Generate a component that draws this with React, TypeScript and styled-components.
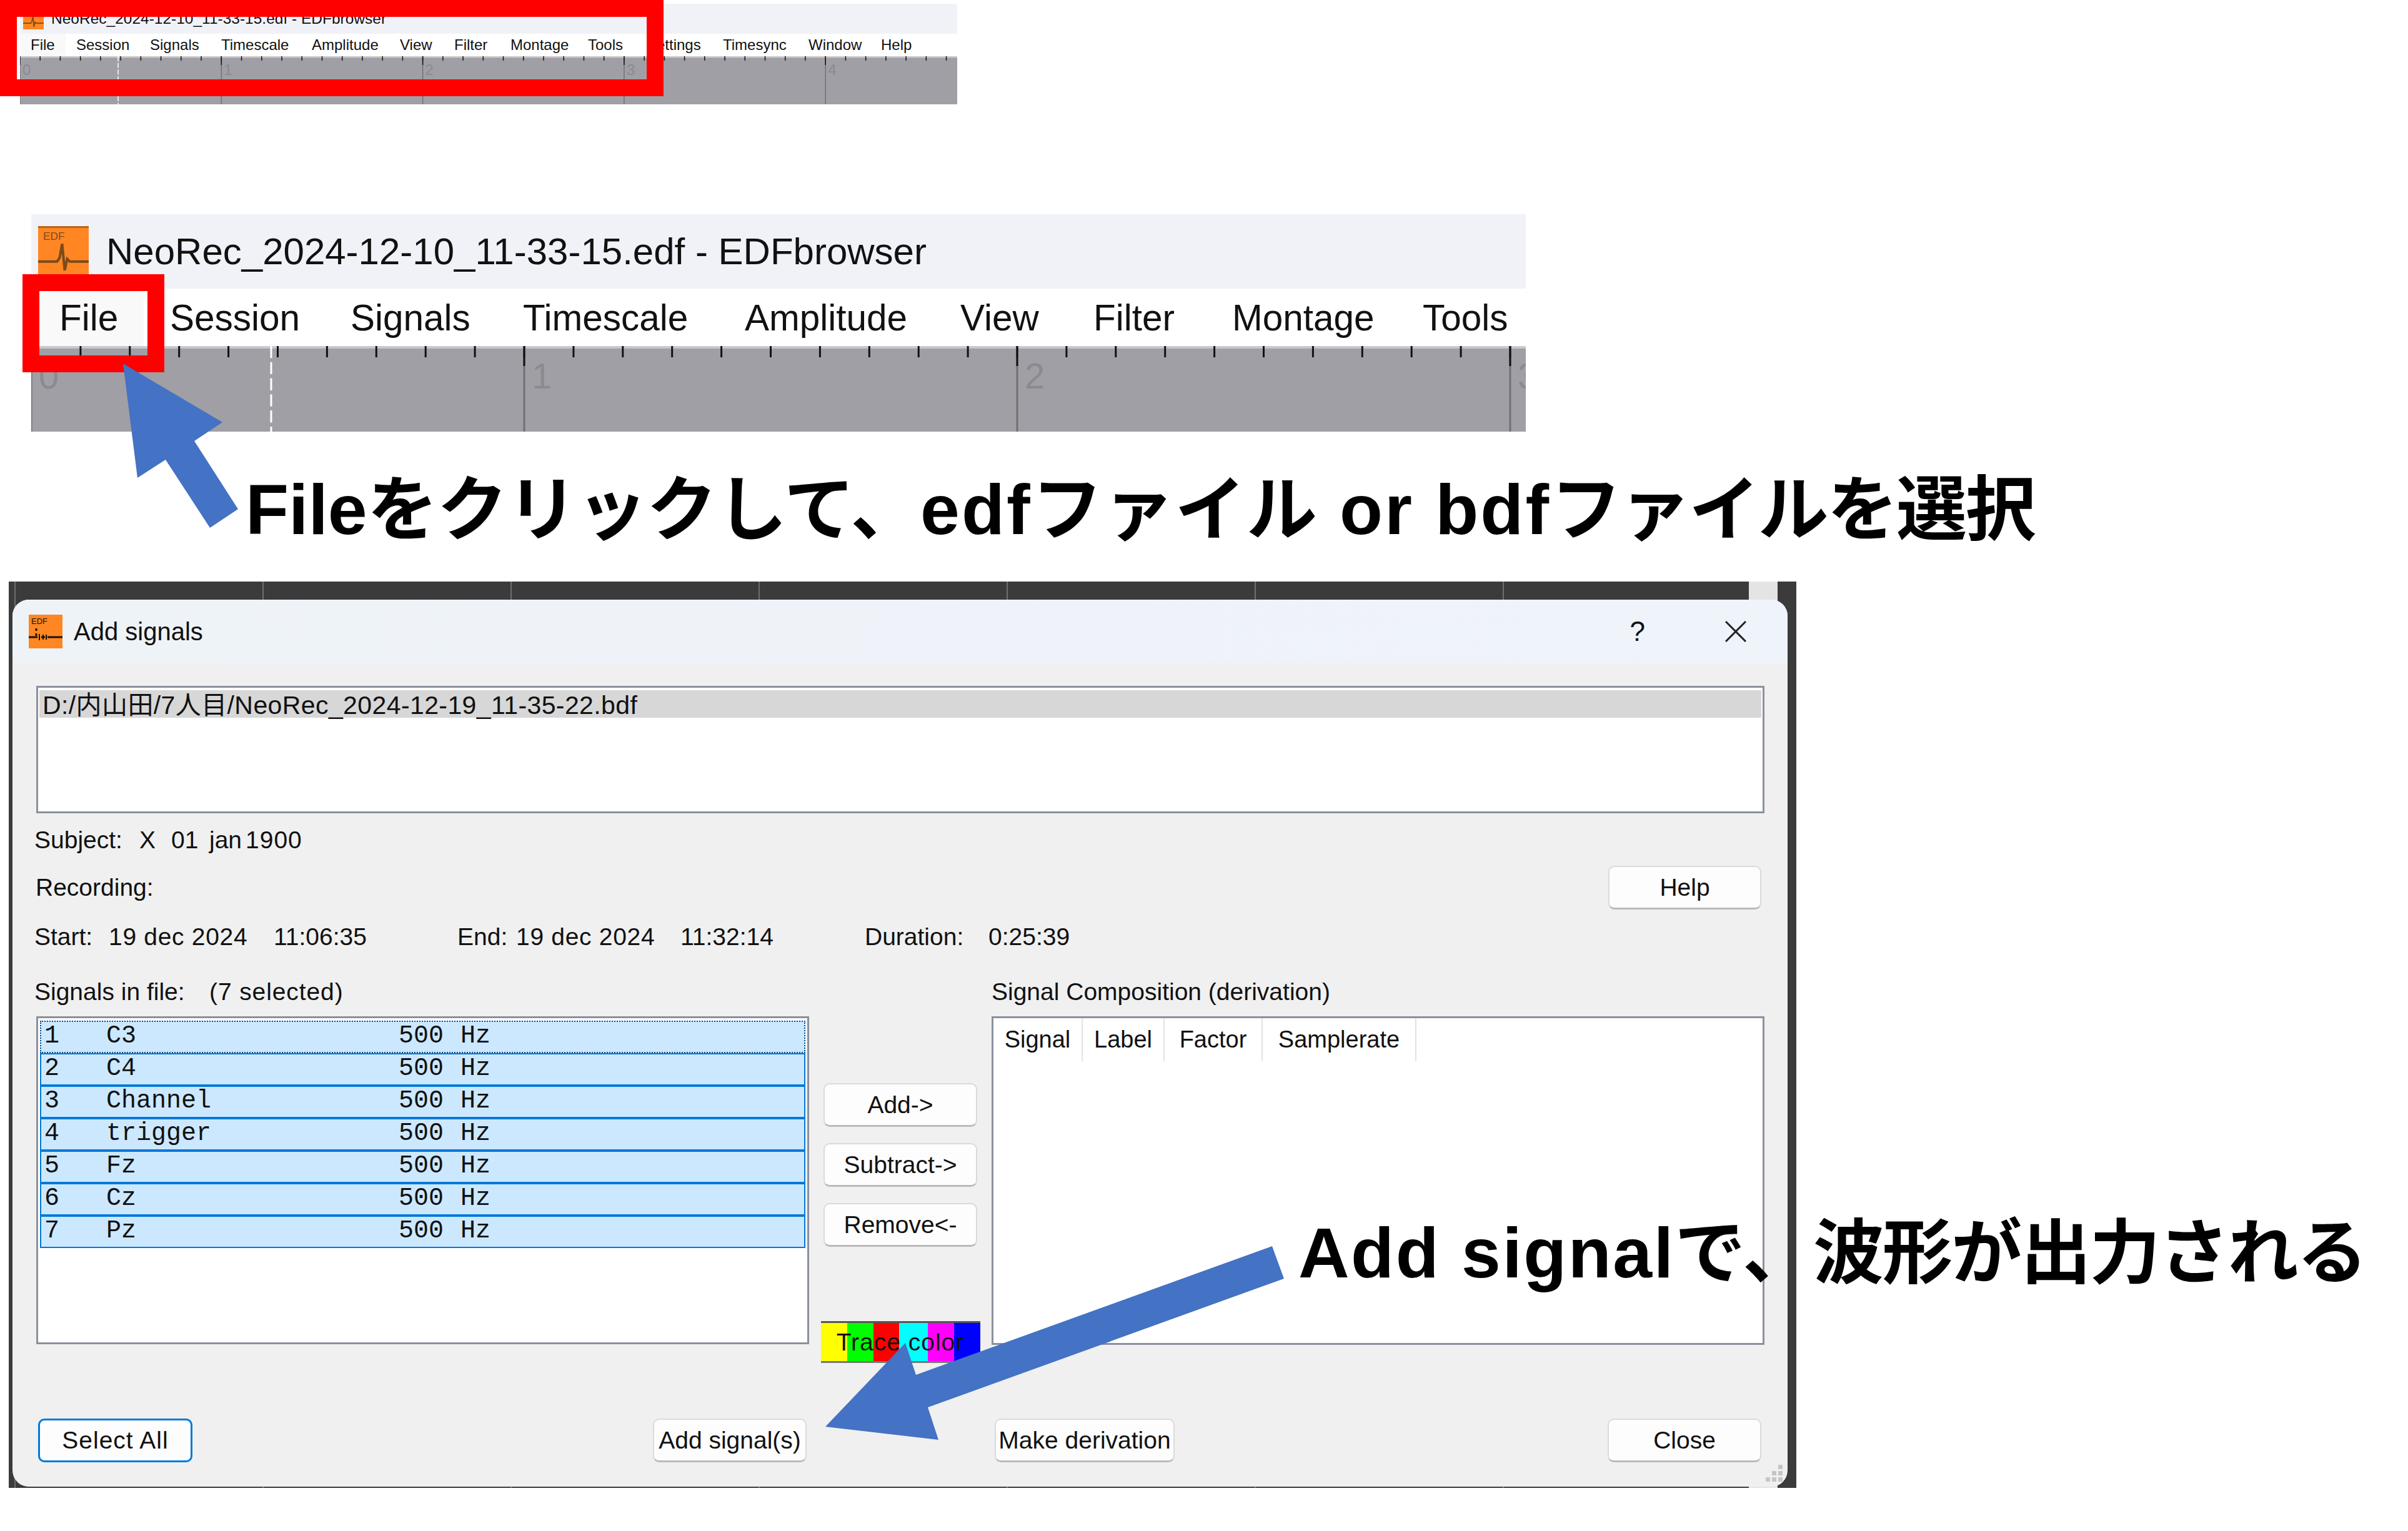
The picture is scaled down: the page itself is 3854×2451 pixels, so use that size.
import styled, { createGlobalStyle } from "styled-components";

const GlobalStyle = createGlobalStyle`
  html, body {
    margin: 0;
    background: #fff;
  }
`;

const SANS = `"Liberation Sans", "Noto Sans CJK JP", sans-serif`;

const Page = styled.div`
  position: relative;
  width: 3854px;
  height: 2451px;
  overflow: hidden;
  background: #fff;
  color: #111;
  font-family: ${SANS};
  display: flex;
  flex-direction: column;
  align-items: flex-start;
`;

/* ---------- EDFbrowser window strips ---------- */

const BrowserWindow = styled.div<{ $left: number; $top: number; $width: number }>`
  margin: ${(p) => p.$top}px 0 0 ${(p) => p.$left}px;
  width: ${(p) => p.$width}px;
  display: flex;
  flex-direction: column;
`;

const WindowTitle = styled.div<{ $h: number; $size: number; $pad: number; $gap: number }>`
  height: ${(p) => p.$h}px;
  padding-left: ${(p) => p.$pad}px;
  display: flex;
  align-items: center;
  gap: ${(p) => p.$gap}px;
  background: #f1f2f8;
  font-size: ${(p) => p.$size}px;
  white-space: pre;
`;

const MenuBar = styled.div<{ $h: number; $size: number; $indent: number }>`
  height: ${(p) => p.$h}px;
  padding-left: ${(p) => p.$indent}px;
  display: flex;
  background: #fff;
  font-size: ${(p) => p.$size}px;
  white-space: pre;
  overflow: hidden;
`;

const MenuItem = styled.div<{ $pad: number; $w: number; $hover?: boolean }>`
  width: ${(p) => p.$w}px;
  box-sizing: border-box;
  padding-left: ${(p) => p.$pad}px;
  display: flex;
  align-items: center;
  background: ${(p) => (p.$hover ? "#f9f9f9" : "transparent")};
`;

const RulerSvg = styled.svg`
  display: block;
  background: #a09fa5;
`;

const RulerLabel = styled.text`
  fill: #8b8b8f;
  font-family: ${SANS};
`;

type RulerProps = {
  width: number;
  height: number;
  pitch: number;
  tick: number;
  major: number;
  dashX: number;
  stroke: number;
  font: number;
  labelX: number;
  labelY: number;
};

function Ruler({ width, height, pitch, tick, major, dashX, stroke, font, labelX, labelY }: RulerProps) {
  const minor = pitch / 10;
  const ticks: number[] = [];
  for (let x = minor; x < width; x += minor) ticks.push(x);
  const majors: number[] = [];
  for (let i = 0; i * pitch < width; i++) majors.push(i);

  return (
    <RulerSvg width={width} height={height}>
      <rect width={width} height={stroke + 1} fill="#c9c9cb" />
      {ticks.map((x) => (
        <line key={x} x1={x} x2={x} y1={0} y2={tick} stroke="#111" strokeWidth={stroke} />
      ))}
      {majors.map((i) => (
        <g key={i}>
          <line x1={i * pitch} x2={i * pitch} y1={0} y2={height} stroke="#717175" strokeWidth={stroke} />
          <line x1={i * pitch} x2={i * pitch} y1={0} y2={major} stroke="#111" strokeWidth={stroke} />
          <RulerLabel x={i * pitch + labelX} y={labelY} fontSize={font}>
            {i}
          </RulerLabel>
        </g>
      ))}
      <line
        x1={dashX}
        x2={dashX}
        y1={0}
        y2={height}
        stroke="#fff"
        strokeWidth={stroke}
        strokeDasharray={`${font / 3} ${font / 9}`}
      />
    </RulerSvg>
  );
}

function AppIcon({ size, line }: { size: number; line: string }) {
  return (
    <svg width={size} height={size} viewBox="0 0 80 80" style={{ flex: "none" }}>
      <rect width="80" height="80" fill="#ff8622" />
      <rect width="80" height="3" fill={line} opacity="0.55" />
      <text x="8" y="22" fontSize="17" fontFamily="Liberation Sans" fill={line}>
        EDF
      </text>
      <path d="M0 56H30L34 50L38 28L42 70L46 52L50 56H80" fill="none" stroke={line} strokeWidth="4" />
    </svg>
  );
}

function DialogIcon() {
  return (
    <svg width="54" height="54" viewBox="0 0 54 54" style={{ flex: "none" }}>
      <rect width="54" height="54" fill="#ff8622" />
      <text x="4" y="15" fontSize="13" fontFamily="Liberation Sans" fill="#1a1208">
        EDF
      </text>
      <path d="M12 22V26M12 30V34M0 36H14M20 36H26M30 36H54" stroke="#1a1208" strokeWidth="3" fill="none" />
      <path d="M17 31V41M23 32V40M28 32V40" stroke="#1a1208" strokeWidth="2" fill="none" />
    </svg>
  );
}

/* ---------- annotation text ---------- */

const Caption = styled.div`
  font-size: 113px;
  font-weight: 700;
  line-height: 120px;
  color: #000;
  white-space: pre;
`;

const FlowCaption = styled(Caption)`
  margin: 65px 0 0 393px;
`;

const FloatingCaption = styled(Caption)`
  position: absolute;
  left: 2078px;
  top: 1946px;
`;

const Run = styled.span<{ $ls: number }>`
  letter-spacing: ${(p) => p.$ls}px;
`;

const RedFrame = styled.div<{ $left: number; $top: number; $w: number; $h: number }>`
  position: absolute;
  left: ${(p) => p.$left}px;
  top: ${(p) => p.$top}px;
  width: ${(p) => p.$w}px;
  height: ${(p) => p.$h}px;
  box-sizing: border-box;
  border: 27px solid #ff0000;
`;

const ArrowLayer = styled.svg`
  position: absolute;
  left: 0;
  top: 0;
`;

/* ---------- Add signals dialog ---------- */

const Backdrop = styled.div`
  margin: 55px 0 0 14px;
  width: 2861px;
  height: 1451px;
  box-sizing: border-box;
  padding: 29px 14px 2px 6px;
  background-color: #3b3b3b;
  background-image: linear-gradient(#e4e4e4, #e4e4e4), linear-gradient(90deg, #6e6e6e 2px, transparent 2px);
  background-repeat: no-repeat, repeat;
  background-size: 46px 100%, 397px 100%;
  background-position: 2785px 0, 9px 0;
`;

const Dialog = styled.div`
  position: relative;
  height: 100%;
  border-radius: 26px;
  overflow: hidden;
  background: #f0f0f0;
  font-size: 39px;
  white-space: pre;
`;

const DialogTitle = styled.div`
  height: 102px;
  padding: 0 66px 0 26px;
  display: flex;
  align-items: center;
  gap: 18px;
  background: linear-gradient(90deg, #eef3f8, #eff3fa);
  font-size: 40px;
`;

const TitleHelp = styled.span`
  margin-left: auto;
  margin-right: 110px;
  font-size: 44px;
`;

const DialogBody = styled.div`
  padding: 36px 37px 0 35px;
`;

const ListBox = styled.div`
  box-sizing: border-box;
  border: 3px solid #8a909c;
  background: #fff;
`;

const FileList = styled(ListBox)`
  margin-left: 3px;
  height: 204px;
  padding: 4px 2px 0;
`;

const FileRow = styled.div`
  height: 44px;
  box-sizing: border-box;
  padding: 0 0 4px 5px;
  display: flex;
  align-items: center;
  background: #d7d7d7;
  font-size: 41px;
  letter-spacing: 0.4px;
`;

const InfoRow = styled.div<{ $top: number }>`
  margin-top: ${(p) => p.$top}px;
  height: 46px;
  display: flex;
  align-items: center;
`;

const RecordingRow = styled.div`
  margin-top: 18px;
  height: 70px;
  padding: 0 5px 0 2px;
  display: flex;
  align-items: center;
  justify-content: space-between;
`;

const TimeRow = styled.div`
  margin-top: 21px;
  height: 46px;
  display: grid;
  grid-template-columns: 677px 652px auto;
  align-items: center;
`;

const Cell = styled.span<{ $w?: number; $ls?: number }>`
  display: inline-block;
  width: ${(p) => (p.$w ? `${p.$w}px` : "auto")};
  letter-spacing: ${(p) => p.$ls ?? 0}px;
`;

const Columns = styled.div`
  margin-top: 42px;
  display: grid;
  grid-template-columns: 1240px 255px 1237px;
  column-gap: 18.5px;
`;

const ListColumn = styled.div`
  display: flex;
  flex-direction: column;
  align-items: stretch;
`;

const ColumnLabel = styled.div`
  height: 46px;
  margin-bottom: 16px;
  display: flex;
  align-items: center;
`;

const SignalList = styled(ListBox)`
  margin-left: 3px;
  height: 525px;
  padding: 4px 3px 0;
`;

const SignalRow = styled.div<{ $focus?: boolean }>`
  height: 52px;
  box-sizing: border-box;
  padding: 0 0 3px 5px;
  display: grid;
  grid-template-columns: 99px 468px 99px auto;
  align-items: center;
  background: #cce8ff;
  border: 2px ${(p) => (p.$focus ? "dotted #0b4c86" : "solid #0078d7")};
  font-family: "Liberation Mono", monospace;
  font-size: 40px;
`;

const MoveColumn = styled.div`
  padding-top: 169px;
  display: flex;
  flex-direction: column;
  align-items: center;
  gap: 26px;
`;

const PushButton = styled.button<{ $w: number; $default?: boolean }>`
  width: ${(p) => p.$w}px;
  height: 70px;
  box-sizing: border-box;
  padding: 0;
  background: #fdfdfd;
  border: ${(p) => (p.$default ? "3px solid #0078d7" : "2px solid #dadada")};
  border-bottom: 3px solid ${(p) => (p.$default ? "#0078d7" : "#bababa")};
  border-radius: 10px;
  color: #111;
  font-family: ${SANS};
  font-size: 39px;
  letter-spacing: ${(p) => (p.$default ? 1 : 0)}px;
  white-space: pre;
`;

const TraceColor = styled.div`
  margin-top: 93px;
  width: 255px;
  height: 67px;
  box-sizing: border-box;
  display: flex;
  align-items: center;
  justify-content: center;
  border-top: 3px solid #555;
  border-bottom: 3px solid #777;
  background: linear-gradient(
    90deg,
    #ffff00 0 16.5%,
    #00ff00 16.5% 33%,
    #ff0000 33% 49%,
    #00ffff 49% 67%,
    #ff00ff 67% 83.5%,
    #0000ff 83.5% 100%
  );
  letter-spacing: 1px;
  color: #111;
`;

const CompositionBox = styled(ListBox)`
  height: 526px;
`;

const CompositionHeader = styled.div`
  height: 69px;
  display: flex;
  font-size: 38px;
`;

const HeaderCell = styled.div<{ $w: number }>`
  width: ${(p) => p.$w}px;
  box-sizing: border-box;
  display: flex;
  align-items: center;
  justify-content: center;
  border-right: 2px solid #e2e2e2;
`;

const Footer = styled.div`
  margin-top: 89px;
  padding-left: 6px;
  display: grid;
  grid-template-columns: 984px 547px 981px 246px;
`;

const SizeGrip = styled.svg`
  position: absolute;
  right: 5px;
  bottom: 5px;
`;

const MENU_SMALL: [string, number][] = [
  ["File", 73],
  ["Session", 118],
  ["Signals", 114],
  ["Timescale", 145],
  ["Amplitude", 141],
  ["View", 87],
  ["Filter", 90],
  ["Montage", 124],
  ["Tools", 94],
  ["Settings", 122],
  ["Timesync", 137],
  ["Window", 116],
  ["Help", 100],
];

const MENU_LARGE: [string, number][] = [
  ["File", 177],
  ["Session", 289],
  ["Signals", 276],
  ["Timescale", 355],
  ["Amplitude", 345],
  ["View", 213],
  ["Filter", 222],
  ["Montage", 305],
  ["Tools", 200],
];

const SIGNALS = ["C3", "C4", "Channel", "trigger", "Fz", "Cz", "Pz"];

const COMPOSITION_HEADERS: [string, number][] = [
  ["Signal", 143],
  ["Label", 131],
  ["Factor", 157],
  ["Samplerate", 246],
];

const GRIP_DOTS = [
  [20, 0],
  [20, 10],
  [10, 10],
  [20, 20],
  [10, 20],
  [0, 20],
];

export default function App() {
  return (
    <Page>
      <GlobalStyle />

      <BrowserWindow $left={32} $top={6} $width={1500}>
        <WindowTitle $h={48} $size={24.5} $pad={5} $gap={12}>
          <AppIcon size={33} line="#7a4a1a" />
          NeoRec_2024-12-10_11-33-15.edf - EDFbrowser
        </WindowTitle>
        <MenuBar $h={36} $size={24} $indent={0}>
          {MENU_SMALL.map(([m, w], i) => (
            <MenuItem key={m} $pad={17} $w={w} $hover={i === 0}>
              {m}
            </MenuItem>
          ))}
        </MenuBar>
        <Ruler width={1500} height={77} pitch={322.3} tick={7} major={14} dashX={157} stroke={1.5} font={24} labelX={4} labelY={30} />
      </BrowserWindow>

      <BrowserWindow $left={50} $top={176} $width={2392}>
        <WindowTitle $h={119} $size={60} $pad={11} $gap={28}>
          <AppIcon size={81} line="#7a4a1a" />
          NeoRec_2024-12-10_11-33-15.edf - EDFbrowser
        </WindowTitle>
        <MenuBar $h={92} $size={58.5} $indent={3}>
          {MENU_LARGE.map(([m, w], i) => (
            <MenuItem key={m} $pad={42} $w={w} $hover={i === 0}>
              {m}
            </MenuItem>
          ))}
        </MenuBar>
        <Ruler width={2392} height={137} pitch={789} tick={18} major={32} dashX={384} stroke={3} font={58} labelX={12} labelY={68} />
      </BrowserWindow>

      <FlowCaption>
        File
        <Run $ls={-1.2}>をクリックして、</Run>
        <Run $ls={3}>edf</Run>
        <Run $ls={1.5}>ファイル</Run>
        <Run $ls={3}> or bdf</Run>
        <Run $ls={-2.4}>ファイルを選択</Run>
      </FlowCaption>

      <Backdrop>
        <Dialog>
          <DialogTitle>
            <DialogIcon />
            Add signals
            <TitleHelp>?</TitleHelp>
            <svg width="34" height="34" viewBox="0 0 34 34">
              <path d="M1 1L33 33M33 1L1 33" stroke="#222" strokeWidth="3" fill="none" />
            </svg>
          </DialogTitle>

          <DialogBody>
            <FileList>
              <FileRow>D:/内山田/7人目/NeoRec_2024-12-19_11-35-22.bdf</FileRow>
            </FileList>

            <InfoRow $top={20}>
              <Cell $w={168}>Subject:</Cell>
              <Cell $w={51}>X</Cell>
              <Cell $w={61}>01</Cell>
              <Cell $w={58}>jan</Cell>
              <Cell $ls={1}>1900</Cell>
            </InfoRow>

            <RecordingRow>
              Recording:
              <PushButton $w={245}>Help</PushButton>
            </RecordingRow>

            <TimeRow>
              <div>
                <Cell $w={119}>Start:</Cell>
                <Cell $w={264} $ls={0.7}>19 dec 2024</Cell>
                <Cell>11:06:35</Cell>
              </div>
              <div>
                <Cell $w={94}>End:</Cell>
                <Cell $w={263} $ls={0.7}>19 dec 2024</Cell>
                <Cell>11:32:14</Cell>
              </div>
              <div>
                <Cell $w={198}>Duration:</Cell>
                <Cell>0:25:39</Cell>
              </div>
            </TimeRow>

            <Columns>
              <ListColumn>
                <ColumnLabel>
                  <Cell $w={280}>Signals in file:</Cell>
                  <Cell $ls={0.9}>(7 selected)</Cell>
                </ColumnLabel>
                <SignalList>
                  {SIGNALS.map((name, i) => (
                    <SignalRow key={name} $focus={i === 0}>
                      <span>{i + 1}</span>
                      <span>{name}</span>
                      <span>500</span>
                      <span>Hz</span>
                    </SignalRow>
                  ))}
                </SignalList>
              </ListColumn>

              <MoveColumn>
                <PushButton $w={246}>{"Add->"}</PushButton>
                <PushButton $w={246}>{"Subtract->"}</PushButton>
                <PushButton $w={246}>{"Remove<-"}</PushButton>
                <TraceColor>Trace color</TraceColor>
              </MoveColumn>

              <ListColumn>
                <ColumnLabel>Signal Composition (derivation)</ColumnLabel>
                <CompositionBox>
                  <CompositionHeader>
                    {COMPOSITION_HEADERS.map(([label, w]) => (
                      <HeaderCell key={label} $w={w}>
                        {label}
                      </HeaderCell>
                    ))}
                  </CompositionHeader>
                </CompositionBox>
              </ListColumn>
            </Columns>

            <Footer>
              <PushButton $w={247} $default>
                Select All
              </PushButton>
              <PushButton $w={246}>Add signal(s)</PushButton>
              <PushButton $w={288}>Make derivation</PushButton>
              <PushButton $w={246}>Close</PushButton>
            </Footer>
          </DialogBody>

          <SizeGrip width="30" height="30" viewBox="0 0 30 30">
            {GRIP_DOTS.map(([x, y]) => (
              <rect key={`${x}-${y}`} x={x} y={y} width="7" height="7" fill="#c6c6c6" />
            ))}
          </SizeGrip>
        </Dialog>
      </Backdrop>

      <FloatingCaption>
        <Run $ls={2.5}>Add signal</Run>
        で、
        <Run $ls={-2.4}>波形が出力される</Run>
      </FloatingCaption>

      <RedFrame $left={0} $top={0} $w={1062} $h={154} />
      <RedFrame $left={36} $top={439} $w={227} $h={157} />

      <ArrowLayer width={3854} height={2451}>
        <polygon points="197,582 356,676 311,706 381,815 336,845 265,736 220,765" fill="#4472c4" />
        <polygon
          points="2036,1995 2055,2047 1485,2253 1502,2305 1321,2284 1449,2150 1466,2201"
          fill="#4472c4"
        />
      </ArrowLayer>
    </Page>
  );
}
